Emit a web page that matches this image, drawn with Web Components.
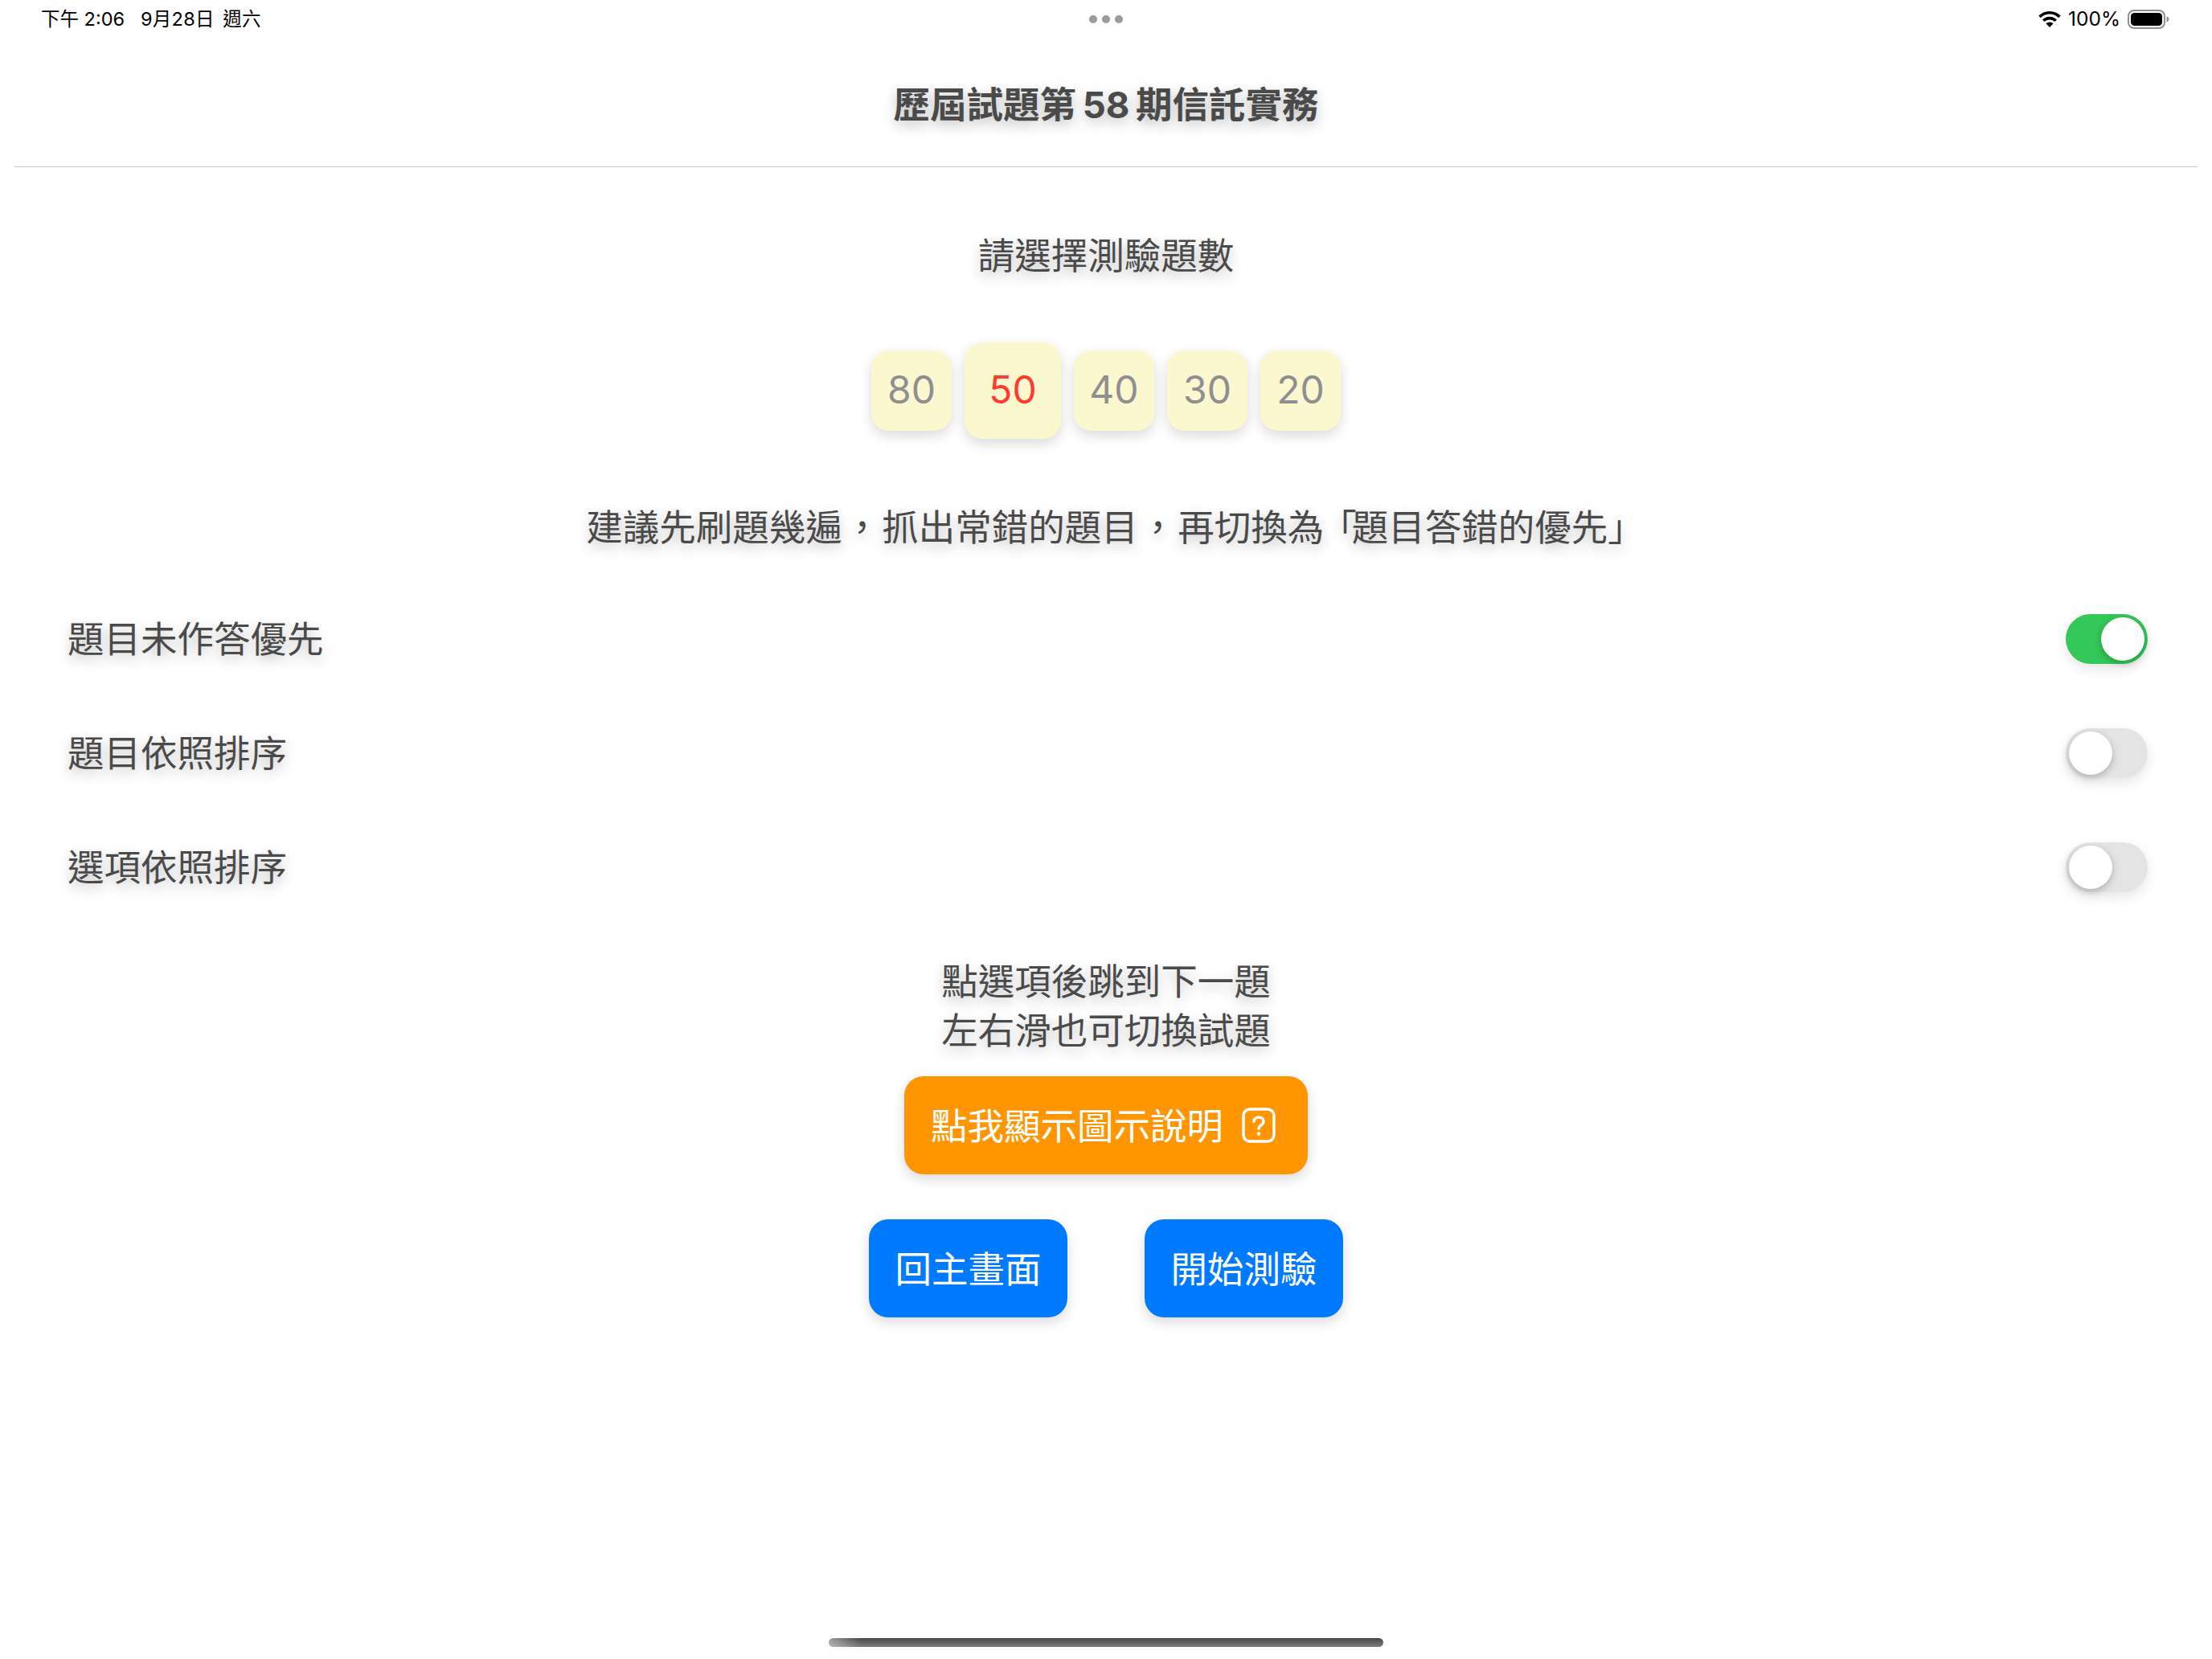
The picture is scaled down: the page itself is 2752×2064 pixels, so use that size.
<!DOCTYPE html>
<html lang="zh-Hant">
<head>
<meta charset="utf-8">
<title>歷屆試題</title>
<style>
  html, body { margin: 0; background: #fff; }
  body {
    width: 2752px;
    height: 2064px;
    overflow: hidden;
    font-family: "Inter", "Noto Sans CJK TC", sans-serif;
    color: #4a4a4a;
  }
</style>
</head>
<body>
<quiz-setup-page>
  <status-bar slot="status"></status-bar>
  <page-header slot="header">歷屆試題第 58 期信託實務</page-header>

  <soft-text style="padding-top:80px">請選擇測驗題數</soft-text>
  <count-picker style="margin-top:77px">
    <count-option>80</count-option>
    <count-option selected>50</count-option>
    <count-option>40</count-option>
    <count-option>30</count-option>
    <count-option>20</count-option>
  </count-picker>
  <soft-text style="margin-top:80px">建議先刷題幾遍<span style="padding:0 2px">，</span>抓出常錯的題目<span style="padding:0 2px">，</span>再切換<span style="letter-spacing:-5px">為</span><span style="letter-spacing:-6px">「</span>題目答錯的優先<span style="margin-right:-23px">」</span></soft-text>

  <toggle-list style="margin-top:77px">
    <toggle-row on>題目未作答優先</toggle-row>
    <toggle-row>題目依照排序</toggle-row>
    <toggle-row>選項依照排序</toggle-row>
  </toggle-list>

  <soft-text style="margin-top:81px">點選項後跳到下一題<br>左右滑也可切換試題</soft-text>

  <action-bar style="margin-top:26px">
    <action-button color="orange" icon>點我顯示圖示說明</action-button>
  </action-bar>
  <action-bar style="margin-top:56px">
    <action-button>回主畫面</action-button>
    <action-button>開始測驗</action-button>
  </action-bar>

  <home-indicator slot="home"></home-indicator>
</quiz-setup-page>

<script>
const cjk = '"Inter", "Noto Sans CJK TC", sans-serif';
const softShadow = '0 6px 16px rgba(0,0,0,.25)';

class QuizSetupPage extends HTMLElement {
  constructor() {
    super();
    this.attachShadow({mode: 'open'});
    this.shadowRoot.innerHTML = `
      <style>
        :host { display: flex; flex-direction: column; height: 2064px; }
        main { display: flex; flex-direction: column; flex: 1; }
      </style>
      <slot name="status"></slot>
      <slot name="header"></slot>
      <main><slot></slot></main>
      <slot name="home"></slot>
    `;
  }
}

class StatusBar extends HTMLElement {
  constructor() {
    super();
    this.attachShadow({mode: 'open'});
    this.shadowRoot.innerHTML = `
      <style>
        :host {
          display: grid;
          grid-template-columns: 1fr auto 1fr;
          align-items: center;
          height: 48px;
          padding: 0 52px 0 51px;
          font: 23.500px "Inter", "Noto Sans CJK TC", sans-serif;
          color: #000;
        }
        .time { white-space: pre; position: relative; top: -2px; }
        .date { letter-spacing: .3px; word-spacing: 3.500px; }
        .dots { display: flex; gap: 6px; }
        .dots i { width: 10px; height: 10px; border-radius: 50%; background: #9a9a9a; }
        .right { display: flex; align-items: center; justify-content: flex-end; gap: 9px; }
        .right span { position: relative; top: -1px; font-size: 24.500px; }
        svg { display: block; }
      </style>
      <div class="time">下午 2:06   <span class="date">9月28日 週六</span></div>
      <div class="dots"><i></i><i></i><i></i></div>
      <div class="right">
        <svg width="28" height="20" viewBox="0 0 28 20">
          <path d="M14 0C8.600 0 3.800 2.100.3 5.600l2.600 2.600C5.700 5.300 9.600 3.600 14 3.600s8.300 1.700 11.100 4.600l2.600-2.600C24.200 2.100 19.400 0 14 0z"/>
          <path d="M14 6.800c-3.500 0-6.700 1.400-9 3.700l2.600 2.600c1.600-1.700 3.900-2.700 6.400-2.700s4.800 1 6.400 2.700l2.600-2.600c-2.300-2.300-5.500-3.700-9-3.700z"/>
          <path d="M14 13.600c-1.700 0-3.300.7-4.400 1.800L14 20l4.400-4.600c-1.100-1.100-2.700-1.800-4.400-1.800z"/>
        </svg>
        <span>100%</span>
        <svg width="53" height="24" viewBox="0 0 53 24">
          <rect x="1" y="1" width="45" height="22" rx="7" fill="none" stroke="#8e8e93" stroke-width="2"/>
          <rect x="4" y="4" width="39" height="16" rx="4.500"/>
          <path d="M48.500 8.500c1.800.6 3 1.900 3 3.500s-1.200 2.900-3 3.500z" fill="#8e8e93"/>
        </svg>
      </div>
    `;
  }
}

class PageHeader extends HTMLElement {
  constructor() {
    super();
    this.attachShadow({mode: 'open'});
    this.shadowRoot.innerHTML = `
      <style>
        :host {
          display: block;
          height: 106px;
          padding-top: 53px;
          margin: 0 18px;
          border-bottom: 1px solid #c8c8c8;
          text-align: center;
          font: bold 45.500px/60px ${cjk};
          word-spacing: -3px;
          color: #4a4a4a;
          text-shadow: ${softShadow};
        }
      </style>
      <slot></slot>
    `;
  }
}

class SoftText extends HTMLElement {
  constructor() {
    super();
    this.attachShadow({mode: 'open'});
    this.shadowRoot.innerHTML = `
      <style>
        :host {
          display: block;
          text-align: center;
          font: 45.500px/61px ${cjk};
          color: #4a4a4a;
          text-shadow: ${softShadow};
        }
      </style>
      <slot></slot>
    `;
  }
}

class CountPicker extends HTMLElement {
  constructor() {
    super();
    this.attachShadow({mode: 'open'});
    this.shadowRoot.innerHTML = `
      <style>
        :host { display: flex; justify-content: center; align-items: center; gap: 16px; height: 120px; }
      </style>
      <slot></slot>
    `;
  }
}

class CountOption extends HTMLElement {
  constructor() {
    super();
    this.attachShadow({mode: 'open'});
    this.shadowRoot.innerHTML = `
      <style>
        :host {
          display: flex;
          align-items: center;
          justify-content: center;
          width: 100px;
          height: 100px;
          box-sizing: border-box;
          padding-bottom: 3px;
          border-radius: 22px;
          background: #fbf7cf;
          color: #8e8e93;
          font: 400 48px "Inter", sans-serif;
          box-shadow: 0 6px 16px rgba(0,0,0,.15);
        }
        :host([selected]) { width: 120px; height: 120px; color: #ff3b30; }
      </style>
      <slot></slot>
    `;
  }
}

class ToggleList extends HTMLElement {
  constructor() {
    super();
    this.attachShadow({mode: 'open'});
    this.shadowRoot.innerHTML = `
      <style>
        :host { display: flex; flex-direction: column; gap: 80px; padding: 0 80px 0 84px; }
      </style>
      <slot></slot>
    `;
  }
}

class ToggleRow extends HTMLElement {
  constructor() {
    super();
    this.attachShadow({mode: 'open'});
    this.shadowRoot.innerHTML = `
      <style>
        :host {
          display: flex;
          align-items: center;
          justify-content: space-between;
          height: 62px;
          font: 45.500px/62px ${cjk};
          color: #4a4a4a;
          text-shadow: ${softShadow};
        }
        .label { padding-top: 1px; }
        .track {
          display: flex;
          align-items: center;
          justify-content: flex-start;
          width: 102px;
          height: 62px;
          padding: 0 4px;
          box-sizing: border-box;
          border-radius: 31px;
          background: #e4e4e4;
          box-shadow: 0 6px 16px rgba(0,0,0,.1);
        }
        .knob {
          width: 54px;
          height: 54px;
          border-radius: 50%;
          background: #fff;
          box-shadow: 0 3px 10px rgba(0,0,0,.25);
        }
        :host([on]) .track { background: #34c759; justify-content: flex-end; }
      </style>
      <div class="label"><slot></slot></div>
      <div class="track"><div class="knob"></div></div>
    `;
  }
}

class ActionBar extends HTMLElement {
  constructor() {
    super();
    this.attachShadow({mode: 'open'});
    this.shadowRoot.innerHTML = `
      <style>
        :host { display: flex; justify-content: center; gap: 96px; }
      </style>
      <slot></slot>
    `;
  }
}

class ActionButton extends HTMLElement {
  constructor() {
    super();
    this.attachShadow({mode: 'open'});
    const icon = this.hasAttribute('icon') ? `
      <svg width="42" height="44" viewBox="0 0 42 44" fill="none" stroke="#fff">
        <rect x="2" y="2" width="38" height="40" rx="8" stroke-width="3.500"/>
        <path d="M15 17.500c0-3.400 2.600-5.500 6-5.500s6 2.100 6 5.200c0 4.400-6 4.400-6 9" stroke-width="3.500" stroke-linecap="round"/>
        <circle cx="21" cy="32.500" r="2.300" fill="#fff" stroke="none"/>
      </svg>` : '';
    this.shadowRoot.innerHTML = `
      <style>
        :host {
          display: flex;
          align-items: center;
          justify-content: center;
          gap: 23px;
          height: 122px;
          padding: 0 32.500px;
          border-radius: 24px;
          background: #007aff;
          color: #fff;
          font: 45.500px ${cjk};
          box-shadow: 0 6px 16px rgba(0,0,0,.15);
        }
        :host([color="orange"]) { background: #ff9500; }
        span { position: relative; top: -2px; }
        svg { margin-right: 7px; }
      </style>
      <span><slot></slot></span>${icon}
    `;
  }
}

class HomeIndicator extends HTMLElement {
  constructor() {
    super();
    this.attachShadow({mode: 'open'});
    this.shadowRoot.innerHTML = `
      <style>
        :host { display: flex; justify-content: center; height: 26px; }
        div {
          width: 690px;
          height: 11px;
          border-radius: 6px;
          background:
            linear-gradient(90deg, rgba(255,255,255,.45), rgba(255,255,255,0) 40px),
            linear-gradient(#474747, #7d7d7d);
        }
      </style>
      <div></div>
    `;
  }
}

customElements.define('quiz-setup-page', QuizSetupPage);
customElements.define('status-bar', StatusBar);
customElements.define('page-header', PageHeader);
customElements.define('soft-text', SoftText);
customElements.define('count-picker', CountPicker);
customElements.define('count-option', CountOption);
customElements.define('toggle-list', ToggleList);
customElements.define('toggle-row', ToggleRow);
customElements.define('action-bar', ActionBar);
customElements.define('action-button', ActionButton);
customElements.define('home-indicator', HomeIndicator);
</script>
</body>
</html>
